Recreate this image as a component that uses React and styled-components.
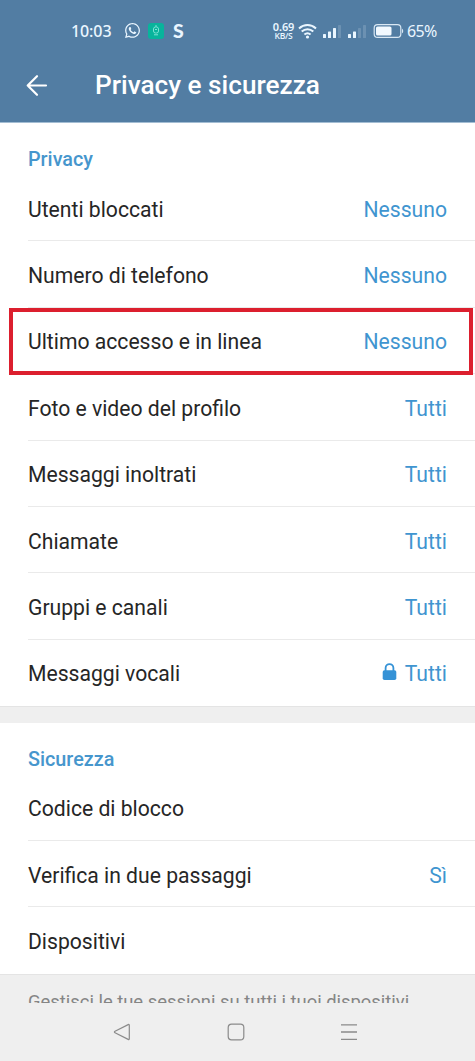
import React from "react";
import styled, { createGlobalStyle } from "styled-components";
import { FaWhatsapp } from "react-icons/fa";

const GlobalStyle = createGlobalStyle`
  * {
    box-sizing: border-box;
  }
  body {
    margin: 0;
    background: #efefef;
    font-family: Roboto, "Liberation Sans", sans-serif;
  }
`;

const Screen = styled.div`
  width: 475px;
  height: 1061px;
  display: flex;
  flex-direction: column;
  overflow: hidden;
  background: #efefef;
`;

const Header = styled.header`
  height: 123px;
  flex-shrink: 0;
  background: #527da3;
  border-bottom: 1px solid #a3bdd3;
  color: #fff;
`;

const StatusBar = styled.div`
  height: 48px;
  padding: 13px 37px 0 71px;
  display: flex;
  align-items: center;
  justify-content: space-between;
  color: #eaf6ff;
`;

const StatusGroup = styled.div`
  display: flex;
  align-items: center;
`;

const Clock = styled.span`
  width: 53px;
  font-family: "Noto Sans", sans-serif;
  font-size: 16px;
  font-weight: 500;
  letter-spacing: -0.1px;
`;

const AppBadge = styled.span`
  width: 16px;
  height: 16px;
  margin: 0 9px 0 7px;
  display: flex;
  align-items: center;
  justify-content: center;
  border-radius: 3px;
  background: #08b49c;
`;

const AppLetter = styled.span`
  font-family: Lato, sans-serif;
  font-size: 19.5px;
  font-weight: 900;
  line-height: 20px;
`;

const Speed = styled.div`
  width: 25px;
  padding-right: 4px;
  display: flex;
  flex-direction: column;
  align-items: center;
  font-family: "Noto Sans", sans-serif;
  font-weight: 600;
`;

const SpeedRate = styled.span`
  font-size: 11px;
  line-height: 10px;
  letter-spacing: -0.1px;
`;

const SpeedUnit = styled.span`
  font-family: "Open Sans", sans-serif;
  font-size: 8.5px;
  line-height: 8px;
  letter-spacing: -0.3px;
`;

const Percent = styled.span`
  margin-left: 3px;
  width: 31px;
  font-family: "Noto Sans", sans-serif;
  font-size: 16px;
  font-weight: 400;
  letter-spacing: -0.7px;
  white-space: nowrap;
`;

const TitleBar = styled.div`
  height: 74px;
  padding-left: 25px;
  display: flex;
  align-items: center;
`;

const Title = styled.h1`
  margin: 0 0 0 47px;
  font-size: 26.2px;
  font-weight: 500;
  line-height: 30px;
`;

const Content = styled.main`
  height: 880px;
  flex-shrink: 0;
  overflow: hidden;
`;

const Section = styled.section`
  margin-bottom: 15.5px;
  background: #fff;
  border-bottom: 1px solid #e4e4e4;
`;

const SectionTitle = styled.h2`
  height: 52px;
  margin: 0;
  padding: 24px 28px 0;
  color: #4696cd;
  font-size: 19.8px;
  font-weight: 500;
  line-height: 26px;
`;

const Row = styled.div`
  position: relative;
  height: 66.4px;
  margin-left: 28px;
  padding: ${(props) => (props.$last ? "2px" : "4px")} 28px 0 0;
  display: flex;
  align-items: center;
  justify-content: space-between;
  border-bottom: ${(props) => (props.$last ? "none" : "1px solid #eaeaea")};
  color: #262626;
  font-size: 21.15px;
  line-height: 28px;
`;

const Highlight = styled.span`
  position: absolute;
  z-index: 1;
  inset: 0 2px -2px -19px;
  border: 4px solid #dc1f2e;
`;

const Value = styled.span`
  display: flex;
  align-items: center;
  gap: 8px;
  color: #3f95d0;
`;

const Hint = styled.p`
  margin: -2px 0 0;
  padding: 0 28px;
  color: #858585;
  font-size: 18.4px;
  line-height: 27px;
  white-space: nowrap;
`;

const NavBar = styled.nav`
  height: 58px;
  flex-shrink: 0;
  padding: 0 117px 0 113px;
  display: flex;
  align-items: center;
  justify-content: space-between;
  background: #efefef;
`;

const Svg = styled.svg`
  display: block;
  flex-shrink: 0;
`;

const LockSvg = styled(Svg)`
  margin-top: -3px;
`;

const privacy = [
  { label: "Utenti bloccati", value: "Nessuno" },
  { label: "Numero di telefono", value: "Nessuno" },
  { label: "Ultimo accesso e in linea", value: "Nessuno", highlight: true },
  { label: "Foto e video del profilo", value: "Tutti" },
  { label: "Messaggi inoltrati", value: "Tutti" },
  { label: "Chiamate", value: "Tutti" },
  { label: "Gruppi e canali", value: "Tutti" },
  { label: "Messaggi vocali", value: "Tutti", locked: true },
];

const security = [
  { label: "Codice di blocco" },
  { label: "Verifica in due passaggi", value: "Sì" },
  { label: "Dispositivi" },
];

const LockIcon = () => (
  <LockSvg width="15" height="18" viewBox="0 0 15 18">
    <path
      d="M3.6 8V5a3.9 3.9 0 0 1 7.8 0v3"
      fill="none"
      stroke="#3592d6"
      strokeWidth="1.8"
    />
    <rect x="0.7" y="7.3" width="13.6" height="9.7" rx="1.8" fill="#3592d6" />
  </LockSvg>
);

const StatusIcons = () => (
  <Svg width="106" height="18" viewBox="0 0 106 18" fill="none">
    <g stroke="#eaf6ff" strokeWidth="2">
      <path d="M1 6.4c5-4.6 12-4.6 17 0" />
      <path d="M3.7 9.6c3.4-3.1 8.2-3.1 11.6 0" />
      <path d="M6.4 12.6c1.9-1.6 4.3-1.6 6.2 0" />
    </g>
    <circle cx="9.5" cy="15" r="1.6" fill="#eaf6ff" />
    <g fill="#eaf6ff">
      <rect x="25" y="12" width="3" height="4" rx="0.6" />
      <rect x="30" y="9.5" width="3" height="6.5" rx="0.6" />
      <rect x="35" y="6" width="3" height="10" rx="0.6" />
      <rect x="50" y="12" width="3" height="4" rx="0.6" />
      <rect x="55" y="9.5" width="3" height="6.5" rx="0.6" />
    </g>
    <g fill="#6c91b2">
      <rect x="40" y="3" width="3" height="13" rx="0.6" />
      <rect x="60" y="6" width="3" height="10" rx="0.6" />
      <rect x="65" y="3" width="3" height="13" rx="0.6" />
    </g>
    <rect
      x="76.2"
      y="2.7"
      width="26.6"
      height="12.6"
      rx="3.4"
      stroke="#d9e8f4"
      strokeWidth="1.2"
    />
    <rect x="78" y="4.5" width="15.5" height="9" rx="1.6" fill="#f2f9ff" />
    <path d="M104 6.7c1.6.6 1.6 4 0 4.6z" fill="#d9e8f4" />
  </Svg>
);

const SettingsRow = ({ item, last }) => (
  <Row $last={last}>
    {item.highlight && <Highlight />}
    <span>{item.label}</span>
    {item.value && (
      <Value>
        {item.locked && <LockIcon />}
        {item.value}
      </Value>
    )}
  </Row>
);

const SettingsSection = ({ title, items }) => (
  <Section>
    <SectionTitle>{title}</SectionTitle>
    {items.map((item, index) => (
      <SettingsRow
        key={item.label}
        item={item}
        last={index === items.length - 1}
      />
    ))}
  </Section>
);

const App = () => {
  return (
    <Screen>
      <GlobalStyle />
      <Header>
        <StatusBar>
          <StatusGroup>
            <Clock>10:03</Clock>
            <FaWhatsapp size={17} />
            <AppBadge>
              <Svg
                width="8"
                height="11"
                viewBox="0 0 8 11"
                fill="none"
                stroke="#7ce3d5"
              >
                <rect x="1.5" y="2" width="5" height="6" rx="2" />
                <path d="M3 1h2M3 4.5h2M2 9.8h4" />
              </Svg>
            </AppBadge>
            <AppLetter>S</AppLetter>
          </StatusGroup>
          <StatusGroup>
            <Speed>
              <SpeedRate>0.69</SpeedRate>
              <SpeedUnit>KB/S</SpeedUnit>
            </Speed>
            <StatusIcons />
            <Percent>65%</Percent>
          </StatusGroup>
        </StatusBar>
        <TitleBar>
          <Svg
            width="23"
            height="23"
            viewBox="0 0 23 23"
            fill="none"
            stroke="#fff"
            strokeWidth="2.2"
            strokeLinecap="round"
            strokeLinejoin="round"
          >
            <path d="M12 2.2 2.7 11.5l9.3 9.3M2.7 11.5h18.3" />
          </Svg>
          <Title>Privacy e sicurezza</Title>
        </TitleBar>
      </Header>
      <Content>
        <SettingsSection title="Privacy" items={privacy} />
        <SettingsSection title="Sicurezza" items={security} />
        <Hint>Gestisci le tue sessioni su tutti i tuoi dispositivi.</Hint>
      </Content>
      <NavBar>
        <Svg width="18" height="18" viewBox="0 0 18 18" fill="none">
          <path
            d="M15.2 1.6 2 8.3c-.8.4-.8 1 0 1.4l13.2 6.7c.6.3 1.1 0 1.1-.6V2.2c0-.6-.5-.9-1.1-.6z"
            stroke="#8b8b8b"
            strokeWidth="1.2"
          />
        </Svg>
        <Svg width="18" height="18" viewBox="0 0 18 18" fill="none">
          <rect
            x="1.2"
            y="1.2"
            width="15.6"
            height="15.6"
            rx="3.4"
            stroke="#8b8b8b"
            strokeWidth="1.2"
          />
        </Svg>
        <Svg width="18" height="18" viewBox="0 0 18 18" fill="none">
          <path
            d="M1 1.8h16M1 9h16M1 16.3h16"
            stroke="#8b8b8b"
            strokeWidth="1.3"
          />
        </Svg>
      </NavBar>
    </Screen>
  );
};

export default App;
